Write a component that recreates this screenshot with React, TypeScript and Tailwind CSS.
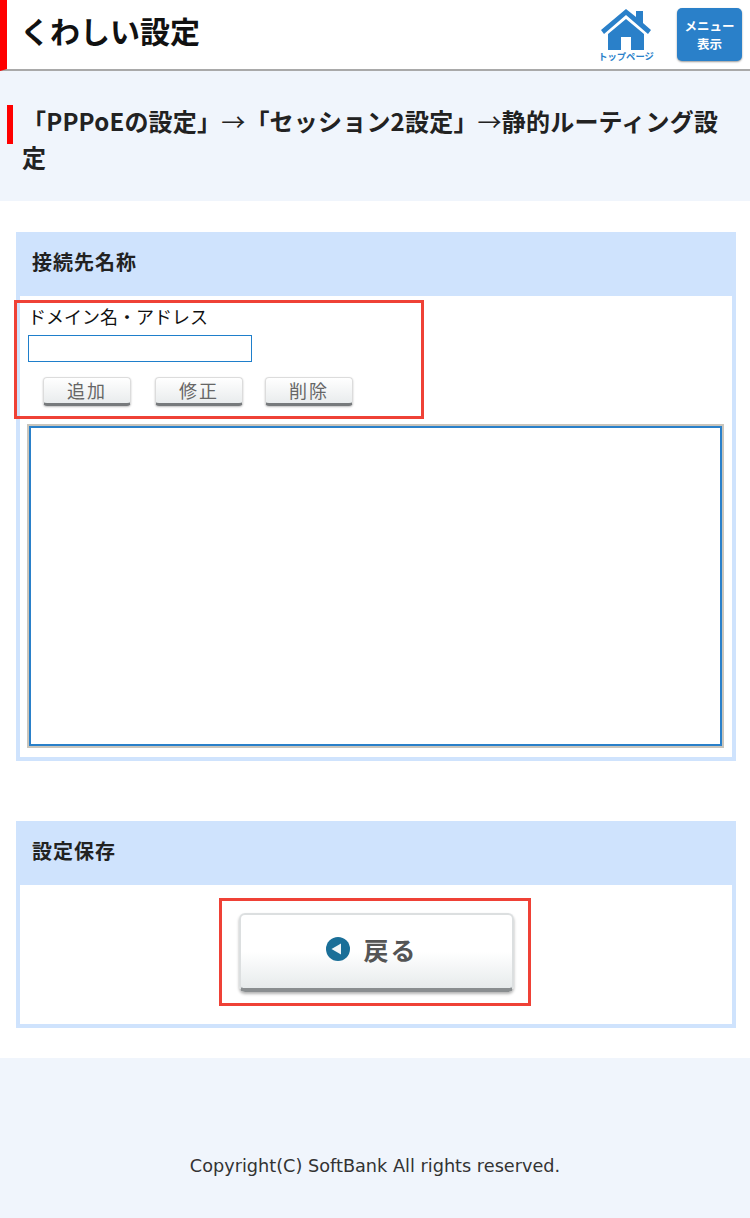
const font = { fontFamily: '"Noto Sans CJK JP", "Noto Sans", sans-serif' };

function SmallButton({ label }: { label: string }) {
    return (
        <button className="flex h-[29px] w-[88px] items-center justify-center rounded-[4px] border border-[#dcdcdc] border-b-[3px] border-b-[#777a7c] bg-gradient-to-b from-white to-[#e9eced] pb-[2px] text-[18px] leading-none tracking-[2px] text-[#666666] shadow-[0_1px_2px_rgba(0,0,0,0.25)]">
            {label}
        </button>
    );
}

function Panel({ title, children }: { title: string; children: React.ReactNode }) {
    return (
        <section className="mx-4 w-[720px] border-4 border-t-0 border-[#cfe3fd] bg-white">
            <h2 className="-mx-1 flex h-16 items-center bg-[#cfe3fd] pb-[5px] pl-4 text-[20px] font-bold tracking-[1px] text-[#222222]">{title}</h2>
            {children}
        </section>
    );
}

export default function App() {
    return (
        <div className="relative h-[1218px] w-[750px] overflow-hidden bg-white text-[#111111]" style={font}>
            {/* ヘッダー */}
            <header className="flex h-[71px] items-center justify-between border-b-2 border-b-[#a9a9a9] border-l-[7px] border-l-[#ff0000] bg-white pl-[13px] pr-[8px]">
                <h1 className="pb-[10px] text-[30px] font-bold leading-none text-[#111111]">くわしい設定</h1>
                <div className="flex items-start gap-[22px]">
                    <div className="flex w-[58px] flex-col items-center">
                        <svg width="52" height="44" viewBox="0 0 52 44" className="-mb-[1px]">
                            <path fill="#2a80c9" d="M26 1 L36 9 V3 H43 V15 L51 22 L48 26 L26 7 L4 26 L1 22 Z" />
                            <path fill="#2a80c9" d="M26 11 L44 26 V42 H31 V29 H21 V42 H8 V26 Z" />
                        </svg>
                        <span className="whitespace-nowrap text-[9.3px] font-bold leading-[10px] text-[#2a80c9]">トップページ</span>
                    </div>
                    <div className="flex h-[53px] w-[65px] flex-col items-center justify-center rounded-[5px] bg-[#2a80c9] text-[12.5px] font-bold leading-[18px] text-white shadow-[0_1px_2px_rgba(0,0,0,0.4)]">
                        <span>メニュー</span>
                        <span>表示</span>
                    </div>
                </div>
            </header>

            {/* ページタイトル */}
            <div className="h-[130px] bg-[#f0f5fc] pt-[34px]">
                <div className="ml-[7px] flex items-start">
                    <div className="h-[39px] w-[6px] shrink-0 bg-[#ff0000]" />
                    <h2 className="-mt-[2px] w-[712px] pl-[9px] text-[24px] font-bold leading-[36px] tracking-[0.2px] text-[#222222]">
                        「PPPoEの設定」<span className="font-normal">→</span>「セッション2設定」<span className="font-normal">→</span>静的ルーティング設定
                    </h2>
                </div>
            </div>

            <main className="pt-[31px]">
                <Panel title="接続先名称">
                    <div className="pl-2 pt-[7px]">
                        <label className="block text-[18px] leading-[26px] text-[#111111]">ドメイン名・アドレス</label>
                        <input className="mt-[6px] block h-[27px] w-[224px] border border-[#1f7fcb] bg-white outline-none" />
                        <div className="mt-[15px] flex pl-[15px]">
                            <SmallButton label="追加" />
                            <div className="w-6" />
                            <SmallButton label="修正" />
                            <div className="w-[22px]" />
                            <SmallButton label="削除" />
                        </div>
                        <div className="-ml-px mt-[18px] h-[324px] w-[697px] border-2 border-[#c9c5bc]">
                            <textarea className="block h-full w-full resize-none border-2 border-[#2a80c9] bg-white outline-none" />
                        </div>
                    </div>
                    <div className="h-[9px]" />
                </Panel>

                <div className="h-[60px]" />

                <Panel title="設定保存">
                    <div className="flex h-[139px] justify-center pt-[28px]">
                        <button className="flex h-[79px] w-[275px] items-center justify-center gap-[13px] rounded-[6px] border-2 border-[#dcdfe0] border-b-[4px] border-b-[#8a8e90] bg-gradient-to-b from-white from-50% to-[#e7ebec] pb-[5px] pr-[8px] text-[25px] font-bold leading-none text-[#555555] shadow-[0_2px_3px_rgba(0,0,0,0.3)]">
                            <svg width="24" height="24" viewBox="0 0 24 24">
                                <circle cx="12" cy="12" r="12" fill="#1a6f98" />
                                <path d="M5.5 12 L15 6.5 V17.5 Z" fill="#f2f6f8" />
                            </svg>
                            <span className="tracking-[2px]">戻る</span>
                        </button>
                    </div>
                </Panel>
            </main>

            {/* フッター */}
            <footer className="mt-[30px] flex h-[160px] justify-center bg-[#f0f5fc] pt-[95px]">
                <p className="text-[17.7px] leading-[26px] text-[#333333]" style={{ fontFamily: '"DejaVu Sans", sans-serif' }}>Copyright(C) SoftBank All rights reserved.</p>
            </footer>

            {/* 注釈の赤枠 */}
            <div className="pointer-events-none absolute left-[14px] top-[300px] h-[119px] w-[410px] border-[3px] border-[#ef4136]" />
            <div className="pointer-events-none absolute left-[219px] top-[898px] h-[108px] w-[312px] border-[3px] border-[#ef4136]" />
        </div>
    );
}
